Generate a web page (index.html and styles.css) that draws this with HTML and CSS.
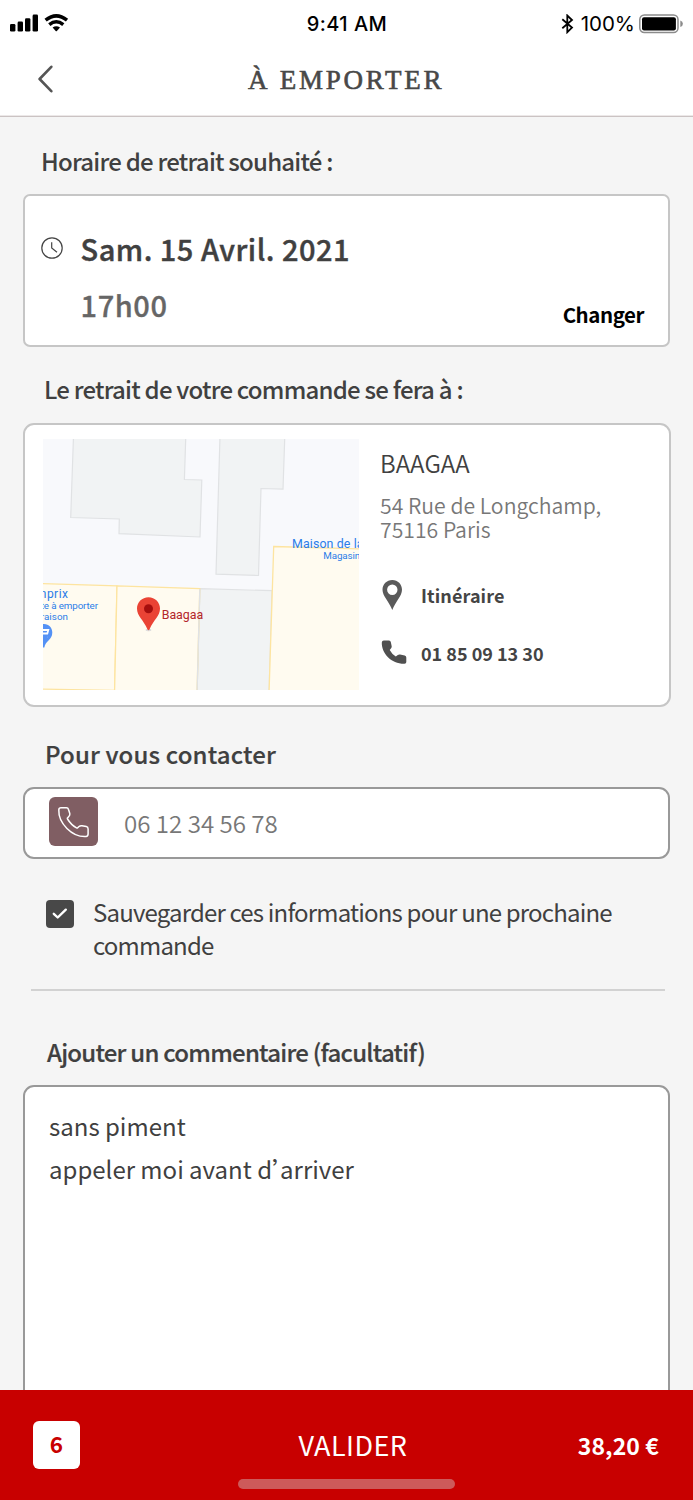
FILE: index.html
```html
<!DOCTYPE html>
<html lang="fr">
<head>
<meta charset="utf-8">
<title>À emporter</title>
<link rel="stylesheet" href="styles.css">
</head>
<body>
<div class="screen">
  <header class="top">
    <div class="status">
      <svg class="signal" width="60" height="20" viewBox="0 0 60 20">
        <rect x="0" y="10" width="5.4" height="7.5" rx="1.3"/>
        <rect x="7.6" y="7.6" width="5.4" height="9.9" rx="1.3"/>
        <rect x="15" y="4.2" width="5.4" height="13.3" rx="1.3"/>
        <rect x="22.6" y="0.6" width="5.4" height="16.9" rx="1.3"/>
        <path d="M35.600 6.200Q46.300-2.400 57 6.200" class="wave"/>
        <path d="M39.300 10.600Q46.300 4.800 53.300 10.600" class="wave"/>
        <path d="M42.600 13.500Q46.300 10.800 50 13.500L46.900 16.900Q46.300 17.500 45.700 16.900Z"/>
      </svg>
      <span class="clock">9:41 AM</span>
      <div class="power">
        <svg class="bt" width="13" height="20" viewBox="0 0 13 20"><path d="M1.300 5.300L11 13.600L6.300 18.200V1.500L11 6L1.300 14.300"/></svg>
        <span class="pct">100%</span>
        <svg width="45" height="20" viewBox="0 0 45 20">
          <rect x="0.800" y="1" width="38.200" height="17.600" rx="4.500" fill="none" stroke="#8b8b8b" stroke-width="1.500"/>
          <rect x="3" y="3.200" width="33.900" height="13.200" rx="2"/>
          <path d="M41.300 6.500Q43.900 7.300 43.900 9.800T41.300 13Z" fill="#8b8b8b"/>
        </svg>
      </div>
    </div>
    <div class="nav">
      <svg class="back" width="16" height="28" viewBox="0 0 16 28"><path d="M14.300 1.800L2.600 14L14.300 26.200"/></svg>
      <h1 class="title">À EMPORTER</h1>
    </div>
  </header>
  <main class="content">
    <h2 class="label label-time">Horaire de retrait souhaité :</h2>
    <section class="card slot">
      <svg class="slot-icon" width="22" height="22" viewBox="0 0 22 22"><circle cx="11" cy="11" r="10.200"/><path d="M10.700 5.300V11L16 15.300"/></svg>
      <div class="slot-text">
        <div class="date">Sam. 15 Avril. 2021</div>
        <div class="hour">17h00</div>
      </div>
      <a class="change">Changer</a>
    </section>
    <h2 class="label label-place">Le retrait de votre commande se fera à :</h2>
    <section class="card place">
      <svg class="map" width="316" height="251" viewBox="43 439 316 251">
        <rect x="42" y="439" width="318" height="252" fill="#f8f9fc"/>
        <g fill="#f1f3f4" stroke="#e0e2e4" stroke-width="1.200">
          <path d="M73.500 436L70.700 517.500L119.300 519L119 533.700L200 537L201.800 480L184.400 479.500L185.800 436Z"/>
          <path d="M220 436L216 574.200L258.500 575.500L261 488.500L283 489.200L284.800 436Z"/>
          <path d="M200 588.700L272 590.700L269 694H197Z"/>
        </g>
        <g fill="#fffbf0" stroke="#fde4a0" stroke-width="1.300">
          <path d="M40 583.500L117 585.800L114.500 694V690.500L40 689Z"/>
          <path d="M117 585.800L199.800 588.700L197 694H114.500Z"/>
          <path d="M273.700 546.500L362 549V694H269Z"/>
        </g>
        <path d="M199.800 589L197 694" stroke="#e0e2e4" stroke-width="1.300"/>
        <g class="poi">
          <text x="292" y="547.700" font-size="12.400" textLength="82">Maison de la T</text>
          <text x="323.200" y="559" font-size="9.800" textLength="37">Magasin</text>
          <text x="21.500" y="597.500" font-size="12" textLength="46.500">Monprix</text>
          <text x="24.500" y="608.700" font-size="9.800" textLength="73.500">Vente à emporter</text>
          <text x="33.500" y="619.800" font-size="9.800" textLength="34.500">ivraison</text>
          <text x="161.700" y="619" font-size="12.400" textLength="41.500" class="poi-main">Baagaa</text>
        </g>
        <path d="M44 624C49 624 52.300 628 52.300 632.500C52.300 640 45.500 640.500 44.300 647.500H43L35.700 632.500C35.700 628 39 624 44 624Z" fill="#5491f5"/>
        <path d="M40 630H48.300L47.300 633.500H41M47 637.200h.1" fill="none" stroke="#fff" stroke-width="1.800"/>
        <ellipse cx="148.500" cy="630" rx="3" ry="1.300" fill="#ddd"/>
        <path d="M148.500 597.200C155 597.200 160 602.300 160 608.500C160 616.500 153.500 619.500 149.500 629.500Q148.500 631 147.500 629.500C143.500 619.500 137 616.500 137 608.500C137 602.300 142 597.200 148.500 597.200Z" fill="#ea4335"/>
        <circle cx="148.500" cy="608.800" r="4.500" fill="#a50e0e"/>
      </svg>
      <div class="info">
        <div class="shop">BAAGAA</div>
        <div class="address">54 Rue de Longchamp,<br>75116 Paris</div>
        <a class="link link-route">
          <svg width="26" height="30" viewBox="0 0 26 30"><path fill="#5a5a5a" fill-rule="evenodd" d="M12.300 0C17.900 0 22 4.300 22 9.700C22 16 15.500 21.500 12.300 30C9.100 21.500 2.500 16 2.500 9.700C2.500 4.300 6.700 0 12.300 0ZM12.300 4.600A5.200 5.200 0 1 0 12.300 15A5.200 5.200 0 1 0 12.300 4.600Z"/></svg>
          <span>Itinéraire</span>
        </a>
        <a class="link link-phone">
          <svg width="27" height="24" viewBox="0.500 0 27 24"><path fill="#505050" transform="translate(1 0)" d="M3.300 .5H8.500Q10 .5 10.300 2L11.200 6.200Q11.400 7.300 10.600 8.200L9.200 10Q11.500 14.300 15.300 16.500L17.300 15Q18.300 14.300 19.500 14.500L24.200 15.500Q25.800 16 25.800 17.500V22Q25.800 23.700 24 23.800C11 24 1 13.500 1.300 2.500Q1.400 .5 3.300 .5Z"/></svg>
          <span>01 85 09 13 30</span>
        </a>
      </div>
    </section>
    <h2 class="label label-contact">Pour vous contacter</h2>
    <div class="field">
      <div class="field-icon">
        <svg width="34" height="34" viewBox="0 0 34 34"><path d="M4 2.800H9.500Q11 2.800 11.500 4.500L12.800 8.500Q13.200 10.200 11.800 11.500L10.500 12.900Q10.100 13.300 10.500 14C13 18 16 21 19.500 22.900Q20.200 23.200 20.700 22.700L22 21.500Q23.300 20.400 25 20.700L29.300 21.600Q31.100 22 31.100 24V29Q31.100 31.300 29 31.500C15 32.300 1.200 18 1.800 4.900Q1.900 2.800 4 2.800Z"/></svg>
      </div>
      <span class="field-value">06 12 34 56 78</span>
    </div>
    <div class="save">
      <div class="check"><svg width="16" height="12" viewBox="0 0 16 12"><path d="M1.800 5.800L5.700 9.500L13.800 1.700"/></svg></div>
      <div class="save-text">Sauvegarder ces informations pour une prochaine<br>commande</div>
    </div>
    <hr class="rule">
    <h2 class="label label-comment">Ajouter un commentaire (facultatif)</h2>
    <div class="comment">sans piment<br>appeler moi avant d<span class="apos">’</span>arriver</div>
  </main>
  <footer class="bar">
    <span class="count">6</span>
    <span class="submit">VALIDER</span>
    <span class="total">38,20 €</span>
    <i class="home"></i>
  </footer>
</div>
</body>
</html>
```
FILE: styles.css
```css
* { box-sizing: border-box; }
body {
  margin: 0;
  background: #f5f5f5;
  color: #404040;
  font-family: "Noto Sans CJK SC", "Open Sans", sans-serif;
}
svg { display: block; flex: none; }
h1, h2 { margin: 0; font-weight: 400; }
.screen { width: 693px; height: 1500px; overflow: hidden; display: flex; flex-direction: column; }

.top { height: 117px; background: #fff; border-bottom: 1px solid #cbc3c3; box-shadow: inset 0 -1px #ece8e8; flex: none; }
.status {
  height: 46px; padding: 2px 9px 0 10px;
  display: grid; grid-template-columns: 1fr auto 1fr; align-items: center;
  color: #000; font-family: Inter, sans-serif;
}
.signal { margin-top: -1px; }
.wave { fill: none; stroke: #000; stroke-width: 3.5; }
.clock { font-size: 20px; font-weight: 500; letter-spacing: 0.45px; line-height: 24px; }
.power { display: flex; align-items: center; justify-content: flex-end; }
.pct { font-size: 20.500px; line-height: 24px; margin: 0 4px 0 8px; }
.bt { margin-right: -1px; }
.bt path { fill: none; stroke: #000; stroke-width: 1.8; }
.nav { height: 66px; display: flex; align-items: center; padding-left: 37px; }
.back path { fill: none; stroke: #555; stroke-width: 2.600; stroke-linecap: round; stroke-linejoin: round; }
.title {
  margin: 2px 0 0 195px; color: #484848;
  font-family: "Liberation Serif", serif; font-size: 27px; line-height: 32px;
  letter-spacing: 2.75px; -webkit-text-stroke: 0.6px #484848;
}

.content { flex: 1; min-height: 0; overflow: hidden; display: flex; flex-direction: column; padding: 1px 23px 0; }
.label { font-size: 24px; line-height: 32px; font-weight: 500; white-space: nowrap; flex: none; }
.label-time { margin: 27px 0 17px 18px; letter-spacing: -0.78px; }
.label-place { margin: 26px 0 18px 21px; letter-spacing: -0.78px; }
.label-contact { margin: 31px 0 17px 22px; letter-spacing: 0.15px; -webkit-text-stroke: 0.2px; }
.label-comment { margin: 45px 0 17px 24px; letter-spacing: -0.76px; -webkit-text-stroke: 0.2px; }

.card { background: #fff; border: 2px solid #c6c6c6; flex: none; display: flex; }
.slot { height: 153px; border-radius: 7px; padding: 0 24px 0 16px; }
.slot-icon { margin-top: 41px; fill: none; stroke: #444; stroke-width: 1.200; }
.slot-text { margin: 30px 0 0 17.500px; flex: 1; }
.date { font-size: 29px; line-height: 44px; font-weight: 500; white-space: nowrap; letter-spacing: 0.5px; -webkit-text-stroke: 0.4px; }
.hour { font-size: 29px; line-height: 44px; font-weight: 500; color: #666; margin-top: 12px; letter-spacing: 0.6px; -webkit-text-stroke: 0.3px; }
.change { margin-top: 103px; font-size: 20.500px; line-height: 30px; font-weight: 700; color: #000; letter-spacing: -0.45px; }

.place { height: 284px; border-radius: 11px; padding: 14px 0 0 18px; width: 648px; }
.info { margin-left: 21px; display: flex; flex-direction: column; }
.shop { font-size: 24px; line-height: 32px; margin-top: 8px; font-weight: 350; letter-spacing: 0.1px; }
.address { font-size: 21.200px; line-height: 24px; color: #777; margin-top: 14px; font-weight: 350; white-space: nowrap; }
.link { display: flex; align-items: center; gap: 15px; font-size: 18px; line-height: 30px; font-weight: 700; color: #444; }
.link-route { margin-top: 39px; letter-spacing: 0.1px; }
.link-phone { margin-top: 28px; gap: 14px; }
.link-phone svg { margin-top: -3px; }

.field { height: 72px; background: #fff; border: 2px solid #999; border-radius: 11px; display: flex; flex: none; padding: 8px 0 0 24px; }
.field-icon { width: 49px; height: 49px; border-radius: 6px; background: #805e63; display: flex; align-items: center; justify-content: center; }
.field-icon path { fill: none; stroke: #fff; stroke-width: 1.500; }
.field-value { margin: 10px 0 0 26px; font-size: 24.100px; line-height: 32px; color: #777; font-weight: 350; }

.save { display: flex; margin: 38px 0 0 23px; flex: none; }
.check { width: 28px; height: 28px; margin-top: 3px; border-radius: 4px; background: #484848; display: flex; align-items: center; justify-content: center; flex: none; }
.check path { fill: none; stroke: #fff; stroke-width: 2.400; stroke-linecap: round; stroke-linejoin: round; }
.save-text { margin: -2px 0 0 19px; font-size: 24px; line-height: 33px; letter-spacing: -0.82px; white-space: nowrap; }
.rule { flex: none; width: 634px; height: 2px; border: 0; background: #d2d2d2; margin: 28px 0 0 8px; }
.comment { flex: none; height: 360px; background: #fff; border: 2px solid #999; border-radius: 11px; padding: 18px 24px; font-size: 24px; line-height: 42.500px; white-space: nowrap; }
.apos { display: inline-block; width: 8px; }

.bar {
  position: relative; height: 110px; flex: none; background: #c80000; color: #fff;
  display: flex; padding: 31px 34px 0 33px;
}
.count { width: 47px; height: 48px; border-radius: 6px; background: #fff; color: #c80000; font-size: 22.500px; line-height: 45px; font-weight: 700; text-align: center; }
.submit { margin: 3px 0 0 218.500px; font-size: 27px; line-height: 42px; letter-spacing: 0.45px; }
.total { margin: 3px 0 0 auto; font-size: 23px; line-height: 42px; font-weight: 700; letter-spacing: 0.1px; }
.home { position: absolute; left: 238px; bottom: 11px; width: 217px; height: 10px; border-radius: 5px; background: #cd5a5a; }

.poi { font-family: Roboto, sans-serif; fill: #2b7de9; }
.poi .poi-main { fill: #b3262a; }
```
